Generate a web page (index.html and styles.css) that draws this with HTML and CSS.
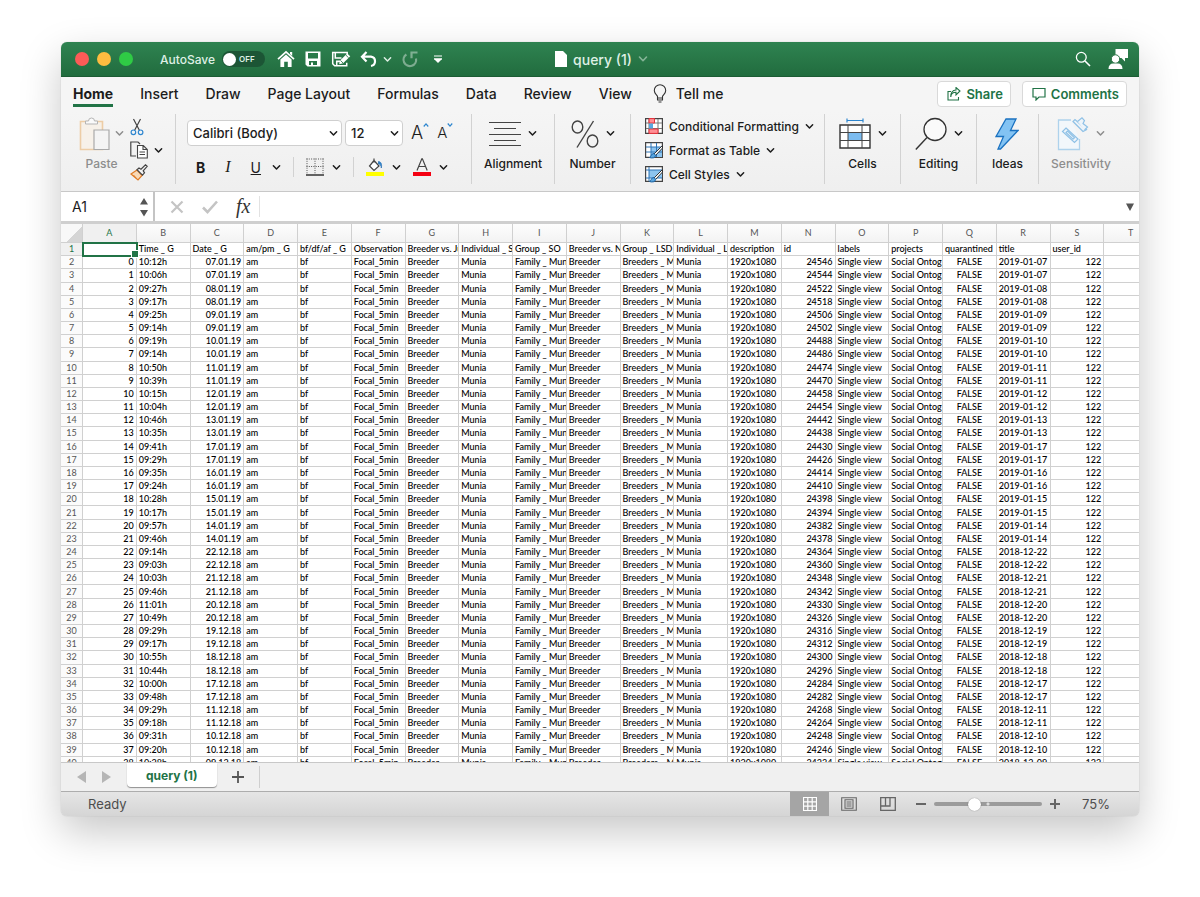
FILE: index.html
```html
<!DOCTYPE html>
<html lang="en">
<head>
    <meta charset="UTF-8">
    <meta name="viewport" content="width=device-width, initial-scale=1.0">
    <title>query (1)</title>
    <link rel="stylesheet" href="styles.css">
</head>
<body>
    <svg class="symbols" aria-hidden="true">
        <symbol id="chevron" viewBox="0 0 8 8"><path d="M1.2 2.4 4 5.4l2.8-3" fill="none" stroke="currentColor" stroke-width="1.3" stroke-linecap="round" stroke-linejoin="round"/></symbol>
    </svg>

    <div class="window">
        <header class="titlebar">
            <div class="title-left">
                <div class="lights">
                    <button class="light red" aria-label="Close"></button>
                    <button class="light yellow" aria-label="Minimize"></button>
                    <button class="light green" aria-label="Zoom"></button>
                </div>
                <label class="autosave">AutoSave
                    <span class="switch"><input type="checkbox"><span class="off">OFF</span></span>
                </label>
                <div class="quick">
                    <button aria-label="Home"><svg width="18" height="18" viewBox="0 0 18 18"><path d="M1 9.200 9 1.800l8 7.400" fill="none" stroke="#fff" stroke-width="1.700"/><path d="M13 2h2.200v4L13 4z" fill="#fff"/><path d="M3.400 9.500 9 4.600l5.600 4.900V17h-3.800v-5.200H7.200V17H3.400z" fill="#fff"/></svg></button>
                    <button aria-label="Save"><svg width="18" height="18" viewBox="0 0 18 18"><path fill="#fff" fill-rule="evenodd" d="M1.500 1.500H16.500V16.500H3.500l-2-2zM4 3v5.500h10V3zM5 11v4h2v-2.500h2V15h4v-4z"/></svg></button>
                    <button aria-label="Save as"><svg width="20" height="18" viewBox="0 0 21 18"><path fill="none" stroke="#fff" stroke-width="1.600" d="M17 4V2.200H1.800V14l2 2H16.500v-3M4.500 2.500V8H11M6 16v-4.500h4"/><path d="m8.500 14.500 1-4L17 3.200l3.200 3-7.500 7.300z" fill="#fff"/><path d="m15.500 4.800 3 3M10 10.500l2.600 2.700" stroke="#24713f" stroke-width=".9"/></svg></button>
                    <button class="undo" aria-label="Undo"><svg width="18" height="18" viewBox="0 0 18 18"><path d="M6.500 2 2 6.700l4.500 4.700M2.300 6.700H11a4.700 4.700 0 0 1 0 9.300" fill="none" stroke="#fff" stroke-width="2.200"/></svg><svg class="chev" width="9" height="9"><use href="#chevron"/></svg></button>
                    <button class="dim" aria-label="Redo"><svg width="18" height="18" viewBox="0 0 18 18"><path d="M5.400 4.500A6.300 6.300 0 1 0 15 8.500M10.500 8.300V2.500h6" fill="none" stroke="#fff" stroke-width="2.200"/></svg></button>
                    <button aria-label="Customize toolbar"><svg width="10" height="10" viewBox="0 0 10 10"><path d="M1 2h8M1 4.800h8" stroke="#fff" stroke-width="1.200"/><path d="M1 5h8L5 9z" fill="#fff"/></svg></button>
                </div>
            </div>
            <button class="doc"><svg width="12" height="16" viewBox="0 0 12 16"><path d="M0 0h8l4 4v12H0z" fill="#fff"/></svg>query (1)<svg class="chev" width="10" height="10"><use href="#chevron"/></svg></button>
            <div class="title-right">
                <button aria-label="Search"><svg width="16" height="16" viewBox="0 0 16 16"><circle cx="6.300" cy="6.300" r="4.900" fill="none" stroke="#fff" stroke-width="1.300"/><path d="m10 10 5 5" stroke="#fff" stroke-width="1.600"/></svg></button>
                <button aria-label="Account"><svg width="20" height="20" viewBox="0 0 20 20"><path d="M7.500 0H20v9h-3v3.500L13.500 9h-6z" fill="#fff"/><circle cx="7.500" cy="10" r="4.200" fill="#fff" stroke="#2a7445"/><path d="M.5 20c0-3.500 2-5.400 4.500-5.400h5c2.500 0 4.500 1.900 4.500 5.400z" fill="#fff"/></svg></button>
            </div>
        </header>

        <nav class="tabs">
            <button class="tab active">Home</button>
            <button class="tab">Insert</button>
            <button class="tab">Draw</button>
            <button class="tab">Page Layout</button>
            <button class="tab">Formulas</button>
            <button class="tab">Data</button>
            <button class="tab">Review</button>
            <button class="tab">View</button>
            <button class="tab tell"><svg width="14" height="20" viewBox="0 0 14 20"><path d="M4.500 14v-1.600C3.700 10.500 1.300 9.700 1.300 6.500a5.700 5.700 0 0 1 11.400 0c0 3.200-2.400 4-3.200 5.900V14zM4.500 14v2h5v-2M5.500 18h3" fill="none" stroke="#333" stroke-width="1.100"/></svg>Tell me</button>
            <div class="tab-actions">
                <button class="pill"><svg width="14" height="14" viewBox="0 0 14 14"><path d="M4 4.500H1v8.500h10.500V10M3.800 10C4 7 6 5.300 9 5.300V8l4-4-4-3.500V3C5.500 3 3.500 6 3.800 10z" fill="none" stroke="#217346" stroke-width="1.100"/></svg>Share</button>
                <button class="pill"><svg width="14" height="14" viewBox="0 0 14 14"><path d="M1 1.500h12v8.500H7l-3 3v-3H1z" fill="none" stroke="#217346" stroke-width="1.200"/></svg>Comments</button>
            </div>
        </nav>

        <section class="ribbon">
            <div class="group clipboard">
                <button class="big faded">
                    <span class="pic"><svg width="32" height="34" viewBox="0 0 32 34"><path d="M1.500 4.500h22v28h-22z" fill="#f7f1e9" stroke="#edcda6" stroke-width="1.600"/><path d="M6.500 7V4h3a3 3 0 0 1 6 0h3v3z" fill="#fafafa" stroke="#b5b5b5"/><path d="M15 13h15v19.500H15z" fill="#f4f4f4" stroke="#a9a9a9" stroke-width="1.200"/></svg><svg class="chev" width="9" height="9"><use href="#chevron"/></svg></span>
                    Paste
                </button>
                <div class="stack">
                    <button aria-label="Cut"><svg width="14" height="18" viewBox="0 0 14 18"><path d="m3.500 1 6 11.500M10.500 1l-6 11.500" stroke="#444" stroke-width="1.200"/><g fill="none" stroke="#2e86cf" stroke-width="1.200"><circle cx="3.400" cy="14.300" r="2.300"/><circle cx="10.600" cy="14.300" r="2.300"/></g></svg></button>
                    <button aria-label="Copy"><svg width="18" height="18" viewBox="0 0 18 18"><path d="M6 15H.8V1H8l2 2" fill="none" stroke="#444" stroke-width="1.200"/><path d="M7.500 4.500h5.800l4 4V17H7.500zM13 4.500v4h4M9.500 11h5.500M9.500 13.500h5.500" fill="#fff" stroke="#444" stroke-width="1.100"/></svg><svg class="chev" width="9" height="9"><use href="#chevron"/></svg></button>
                    <button aria-label="Format painter"><svg width="18" height="17" viewBox="0 0 18 17"><path d="m1 10 6-4 5 5.500L8 16z" fill="#f9d9b6" stroke="#e07b25" stroke-width="1.200"/><path d="m3.500 11 3 3.500" stroke="#e07b25"/><path d="m7 5.800 2-1.800 2 1.200L15.500.8l1.700 1.500-4 4.500 1.300 2-2 2.400z" fill="#f3f3f3" stroke="#444" stroke-width="1.200"/></svg></button>
                </div>
            </div>

            <div class="group font">
                <div class="row">
                    <label class="drop family"><select aria-label="Font"><option>Calibri (Body)</option></select><svg width="9" height="9"><use href="#chevron"/></svg></label>
                    <label class="drop size"><select aria-label="Font size"><option>12</option></select><svg width="9" height="9"><use href="#chevron"/></svg></label>
                    <button class="grow" aria-label="Increase font size">A<svg width="6" height="6" viewBox="0 0 8 8"><path d="m1 6 3-3.500L7 6" fill="none" stroke="#2e86cf" stroke-width="1.600"/></svg></button>
                    <button class="grow shrink" aria-label="Decrease font size">A<svg width="6" height="6" viewBox="0 0 8 8"><path d="m1 2 3 3.500L7 2" fill="none" stroke="#2e86cf" stroke-width="1.600"/></svg></button>
                </div>
                <div class="row marks">
                    <button class="mark bold">B</button>
                    <button class="mark italic">I</button>
                    <button class="mark underline"><u>U</u><svg width="9" height="9"><use href="#chevron"/></svg></button>
                    <i class="rule"></i>
                    <button class="mark" aria-label="Borders"><svg width="18" height="18" viewBox="0 0 18 18"><path d="M.5 1h17M.5 8.500h17M1 .5v16M9 .5v16M17 .5v16" stroke="#555" stroke-dasharray="1 1.300"/><path d="M0 17h18" stroke="#333" stroke-width="1.400"/></svg><svg width="9" height="9"><use href="#chevron"/></svg></button>
                    <i class="rule"></i>
                    <button class="mark" aria-label="Fill color"><svg width="18" height="18" viewBox="0 0 18 18"><path d="M8 .5v4M8 2.500l5 5.500-5 4.500L3.500 8z" fill="#fff" stroke="#444" stroke-width="1.200"/><path d="M12.500 3.500c3 .5 3.500 3 2.800 6.500-.2-2.500-1-4-2.800-4z" fill="#2e86cf" stroke="#2e75b6" stroke-width=".8"/><path d="M0 14h18v4H0z" fill="#ff0"/></svg><svg width="9" height="9"><use href="#chevron"/></svg></button>
                    <button class="mark" aria-label="Font color"><svg width="18" height="18" viewBox="0 0 18 18"><path d="M4 12.500 8.800.8h.6l4.800 11.700M5.700 8.500h6.800" fill="none" stroke="#444" stroke-width="1.200"/><path d="M0 14h18v4H0z" fill="#f40012"/></svg><svg width="9" height="9"><use href="#chevron"/></svg></button>
                </div>
            </div>

            <div class="group">
                <button class="big"><span class="pic"><svg width="32" height="26" viewBox="0 0 32 26"><path d="M0 1.500h32M5 7.500h22M0 13.500h32M5 19.500h22M0 24.500h32" stroke="#444" stroke-width="1.200"/></svg><svg class="chev" width="9" height="9"><use href="#chevron"/></svg></span>Alignment</button>
            </div>
            <div class="group">
                <button class="big"><span class="pic"><svg width="28" height="28" viewBox="0 0 28 28"><g fill="none" stroke="#444" stroke-width="1.400"><ellipse cx="6.500" cy="7" rx="5.300" ry="6"/><ellipse cx="21.500" cy="21" rx="5.300" ry="6"/><path d="M22.500 1 6 27.500"/></g></svg><svg class="chev" width="9" height="9"><use href="#chevron"/></svg></span>Number</button>
            </div>

            <div class="group styles">
                <button><svg width="18" height="16" viewBox="0 0 18 16"><path d="M.6.6h16.800v14.800H.6z" fill="#fff" stroke="#444" stroke-width="1.200"/><path d="M4 1v14M13 1v14M1 5h16M1 10.500h16" stroke="#777"/><path d="M4 .6h5.500V5H4zM4 11h9v4.400H4z" fill="#ff8f94" stroke="#e8303a"/><path d="M4 5.500h4v5H4z" fill="#5aa7e0"/></svg>Conditional Formatting<svg width="9" height="9"><use href="#chevron"/></svg></button>
                <button><svg width="18" height="17" viewBox="0 0 18 17"><path d="M.6.6h16.800v14.800H.6z" fill="#fff" stroke="#444" stroke-width="1.200"/><path d="M6 5h11v10H6z" fill="#8cc4ef"/><path d="M6 1v14M11.500 1v14M1 5h16M1 10h16" stroke="#2e75b6"/><path d="M17.500 3.500 9 12l1.500 1.500L17.500 6z" fill="#fff" stroke="#333"/><path d="M9 11.500c-3 0-2.500 3-4.500 4 2.500 1 6 .5 6.200-2.200z" fill="#5aa7e0" stroke="#1e66a8"/></svg>Format as Table<svg width="9" height="9"><use href="#chevron"/></svg></button>
                <button><svg width="18" height="17" viewBox="0 0 18 17"><path d="M.6.6h16.800v14.800H.6z" fill="#fff" stroke="#444" stroke-width="1.200"/><path d="M4 4h13v8H4z" fill="#8cc4ef"/><path d="M4 1v14M1 4h16M1 12h16" stroke="#2e75b6"/><path d="M17.500 3.500 9 12l1.500 1.500L17.500 6z" fill="#fff" stroke="#333"/><path d="M9 11.500c-3 0-2.500 3-4.500 4 2.500 1 6 .5 6.200-2.200z" fill="#5aa7e0" stroke="#1e66a8"/></svg>Cell Styles<svg width="9" height="9"><use href="#chevron"/></svg></button>
            </div>

            <div class="group">
                <button class="big"><span class="pic"><svg width="32" height="32" viewBox="0 0 32 32"><path d="M8 2.500h16M8 .5v4M24 .5v4" stroke="#2e86cf" stroke-width="1.200"/><path d="M1 7h30v23H1z" fill="#fff" stroke="#333" stroke-width="1.400"/><path d="M9 14.500h14v8H9z" fill="#7cbcf0"/><path d="M9 7v23M23 7v23M1 14.500h30M1 22.500h30" stroke="#444"/></svg><svg class="chev" width="9" height="9"><use href="#chevron"/></svg></span>Cells</button>
            </div>
            <div class="group">
                <button class="big"><span class="pic"><svg width="32" height="34" viewBox="0 0 32 34"><circle cx="20" cy="12.500" r="11" fill="#fafafa" stroke="#333" stroke-width="1.300"/><path d="M12 20.500.8 32.500" stroke="#333" stroke-width="1.400"/></svg><svg class="chev" width="9" height="9"><use href="#chevron"/></svg></span>Editing</button>
            </div>
            <div class="group">
                <button class="big"><span class="pic"><svg width="24" height="32" viewBox="0 0 24 32"><path d="M11 1h10l-5.500 11.500H23L5.500 31H3l5.500-12.500H1z" fill="#83c3f3" stroke="#1b72c0" stroke-width="1.300"/></svg></span>Ideas</button>
            </div>
            <div class="group">
                <button class="big faded"><span class="pic"><svg width="32" height="34" viewBox="0 0 32 34"><path d="M14 3H1.500v29.500h21V22" fill="#f2f7fb" stroke="#aed2ec" stroke-width="1.300"/><g fill="#edf4fa" stroke="#8fc1e6" stroke-width="1.200"><path d="m9 11 12 11-3.500 3.500L5.500 14.500z"/><path d="m10.500 14 7 6.800-1.500 1.400-7-6.800zM16 4.500 26 14.500l3.500-1.800L18 2.500z"/><path d="M20.500 4.500 25 .8l2.500 2.700-1.500 3 4.500 3.500-3 3"/></g></svg><svg class="chev" width="9" height="9"><use href="#chevron"/></svg></span>Sensitivity</button>
            </div>
        </section>

        <div class="formula">
            <div class="name-box">
                <input type="text" value="A1" aria-label="Cell name">
                <button aria-label="Name list"><svg width="10" height="20" viewBox="0 0 10 20"><path d="m5 1 4 6.500H1zM5 19.500 1 13h8z" fill="#555"/></svg></button>
            </div>
            <div class="fx">
                <button aria-label="Cancel"><svg width="14" height="14" viewBox="0 0 14 14"><path d="m1.500 1.500 11 11M12.500 1.500l-11 11" stroke="#c4c4c4" stroke-width="2.200"/></svg></button>
                <button aria-label="Enter"><svg width="16" height="14" viewBox="0 0 16 14"><path d="m1 7.500 4.500 4.500L15 1.500" fill="none" stroke="#c4c4c4" stroke-width="2.600"/></svg></button>
                <button class="fn">fx</button>
            </div>
            <input class="entry" type="text" aria-label="Formula">
            <button class="expand" aria-label="Expand"><svg width="8" height="8" viewBox="0 0 8 8"><path d="M0 .5h8L4 8z" fill="#555"/></svg></button>
        </div>

        <main class="sheet">
            <table class="grid">
                <thead></thead>
                <tbody></tbody>
            </table>
        </main>

        <footer class="sheet-tabs">
            <button class="arrow" aria-label="Previous sheet"><svg width="9" height="12" viewBox="0 0 9 12"><path d="M9 0v12L0 6z" fill="#b5b5b5"/></svg></button>
            <button class="arrow" aria-label="Next sheet"><svg width="9" height="12" viewBox="0 0 9 12"><path d="M0 0v12l9-6z" fill="#b5b5b5"/></svg></button>
            <button class="sheet-tab">query (1)</button>
            <button class="add" aria-label="Add sheet"><svg width="12" height="12" viewBox="0 0 12 12"><path d="M6 0v12M0 6h12" stroke="#555" stroke-width="1.800"/></svg></button>
        </footer>

        <div class="status">
            <span class="ready">Ready</span>
            <button class="view on" aria-label="Normal view"><svg width="14" height="14" viewBox="0 0 14 14"><path d="M.5.500h13v13H.5zM4.800.5v13M9.200.5v13M.5 4.800h13M.5 9.200h13" fill="none" stroke="#fff" stroke-width="1.200"/></svg></button>
            <button class="view" aria-label="Page layout view"><svg width="16" height="14" viewBox="0 0 16 14"><path d="M.7.7h14.600v12.600H.7zM4 2.800h8v8.400H4zM5.500 5h5M5.500 7h5M5.500 9h5" fill="none" stroke="#666" stroke-width="1.100"/></svg></button>
            <button class="view" aria-label="Page break view"><svg width="16" height="14" viewBox="0 0 16 14"><path d="M.7.7h14.600v12.600H.7zM1 9h9V1M5.500 1v8" fill="none" stroke="#666" stroke-width="1.300"/></svg></button>
            <div class="zoom">
                <button aria-label="Zoom out"><svg width="10" height="10" viewBox="0 0 10 10"><path d="M0 5h10" stroke="#666" stroke-width="2"/></svg></button>
                <input type="range" min="0" max="100" value="36" aria-label="Zoom">
                <button aria-label="Zoom in"><svg width="10" height="10" viewBox="0 0 10 10"><path d="M0 5h10M5 0v10" stroke="#666" stroke-width="2"/></svg></button>
                <span class="percent">75%</span>
            </div>
        </div>
    </div>

    <script>
        const letters = 'ABCDEFGHIJKLMNOPQRST'.split('');
        const titles = ['', 'Time _ G', 'Date _ G', 'am/pm _ G', 'bf/df/af _ G', 'Observation', 'Breeder vs. Ju', 'Individual _ S', 'Group _ SO', 'Breeder vs. N', 'Group _ LSD', 'Individual _ L', 'description', 'id', 'labels', 'projects', 'quarantined', 'title', 'user_id', ''];
        // time, date, id
        const records = `10:12 07.01.19 24546|10:06 07.01.19 24544|09:27 08.01.19 24522|09:17 08.01.19 24518
            |09:25 09.01.19 24506|09:14 09.01.19 24502|09:19 10.01.19 24488|09:14 10.01.19 24486
            |10:50 11.01.19 24474|10:39 11.01.19 24470|10:15 12.01.19 24458|10:04 12.01.19 24454
            |10:46 13.01.19 24442|10:35 13.01.19 24438|09:41 17.01.19 24430|09:29 17.01.19 24426
            |09:35 16.01.19 24414|09:24 16.01.19 24410|10:28 15.01.19 24398|10:17 15.01.19 24394
            |09:57 14.01.19 24382|09:46 14.01.19 24378|09:14 22.12.18 24364|09:03 22.12.18 24360
            |10:03 21.12.18 24348|09:46 21.12.18 24342|11:01 20.12.18 24330|10:49 20.12.18 24326
            |09:29 19.12.18 24316|09:17 19.12.18 24312|10:55 18.12.18 24300|10:44 18.12.18 24296
            |10:00 17.12.18 24284|09:48 17.12.18 24282|09:29 11.12.18 24268|09:18 11.12.18 24264
            |09:31 10.12.18 24248|09:20 10.12.18 24246|10:28 09.12.18 24234`.split('|').map(r => r.trim().split(' '));

        const rightCols = [0, 2, 13, 18];

        function cell(text, col) {
            const side = rightCols.includes(col) ? 'num' : col === 16 ? 'mid' : '';
            return `<td class="${side}">${text}</td>`;
        }

        document.querySelector('.grid thead').innerHTML =
            '<tr><th class="corner"></th>' + letters.map((l, i) => `<th class="${i ? '' : 'current'}">${l}</th>`).join('') + '</tr>';

        let html = '<tr><th class="current">1</th>' + titles.map((t, i) => i ? `<td>${t}</td>` : '<td class="selected"></td>').join('') + '</tr>';
        records.forEach(([time, date, id], n) => {
            const [d, m, y] = date.split('.');
            const row = [n, time + 'h', date, 'am', 'bf', 'Focal_5min', 'Breeder', 'Munia', 'Family _ Mun', 'Breeder', 'Breeders _ M', 'Munia', '1920x1080', id, 'Single view', 'Social Ontog', 'FALSE', `20${y}-${m}-${d}`, 122, ''];
            html += `<tr><th>${n + 2}</th>${row.map(cell).join('')}</tr>`;
        });
        document.querySelector('.grid tbody').innerHTML = html;
    </script>
</body>
</html>
```
FILE: styles.css
```css
* {
    box-sizing: border-box;
    margin: 0;
    padding: 0;
}

body {
    display: flex;
    flex-direction: column;
    height: 100vh;
    padding: 42px 61px 81px;
    background: #fff;
    font-family: Inter, "Liberation Sans", sans-serif;
    font-size: 12px;
    color: #1c1c1c;
}

button,
input,
select {
    font: inherit;
    color: inherit;
    background: none;
    border: 0;
    outline: 0;
}

button {
    display: flex;
    align-items: center;
}

svg {
    display: block;
    flex-shrink: 0;
}

.symbols {
    position: absolute;
    width: 0;
    height: 0;
}

.window {
    flex: 1;
    min-height: 0;
    display: flex;
    flex-direction: column;
    border-radius: 6px;
    overflow: hidden;
    background: #f1f1f1;
    box-shadow: 0 0 1px rgba(0, 0, 0, 0.3), 0 16px 40px rgba(0, 0, 0, 0.22);
}

/* title bar */
.titlebar {
    flex: none;
    display: grid;
    grid-template-columns: 1fr auto 1fr;
    align-items: center;
    height: 35px;
    padding: 0 11px 0 14px;
    background: linear-gradient(#2f8351, #216c3e);
    border-bottom: 1px solid #1c5c34;
    color: #dff0e5;
}

.title-left,
.title-right,
.lights,
.autosave,
.quick {
    display: flex;
    align-items: center;
}

.lights {
    gap: 8px;
}

.light {
    width: 14px;
    height: 14px;
    border-radius: 50%;
}

.red { background: #fc5b57; }
.yellow { background: #fdbc40; }
.green { background: #2fcb45; }

.autosave {
    gap: 7px;
    margin-left: 27px;
    font-weight: 500;
}

.switch {
    display: flex;
    align-items: center;
    width: 43px;
    height: 16px;
    border-radius: 8px;
    background: #1c5535;
}

.switch input {
    appearance: none;
    width: 13px;
    height: 13px;
    margin-left: 1px;
    border-radius: 50%;
    background: #fff;
}

.off {
    margin-left: 3px;
    font-size: 8px;
    font-weight: 600;
}

.quick {
    gap: 9px;
    margin-left: 12px;
}

.undo {
    gap: 5px;
}

.dim {
    opacity: 0.4;
}

.quick button:last-child {
    margin-left: 5px;
}

.doc {
    gap: 6px;
    font-size: 14px;
    font-weight: 500;
}

.doc .chev {
    opacity: 0.5;
}

.title-right {
    justify-content: flex-end;
    gap: 17px;
}

/* ribbon tabs */
.tabs {
    flex: none;
    display: flex;
    align-items: center;
    gap: 27px;
    height: 34px;
    padding: 0 12px;
    background: #f5f5f5;
}

.tab {
    font-size: 14px;
    line-height: 20px;
    font-weight: 500;
    border-bottom: 3px solid transparent;
    border-top: 3px solid transparent;
}

.tab.active {
    font-weight: 700;
    border-bottom-color: #217346;
}

.tell {
    gap: 9px;
    margin-left: -6px;
}

.tab-actions {
    display: flex;
    gap: 11px;
    margin-left: auto;
}

.pill {
    gap: 5px;
    height: 26px;
    padding: 0 7px 0 9px;
    border: 1px solid #d9d9d9;
    border-radius: 4px;
    background: #fff;
    color: #217346;
    font-size: 13px;
    font-weight: 600;
}

/* ribbon */
.ribbon {
    flex: none;
    display: grid;
    grid-template-columns: 115fr 296fr 83fr 76fr 194fr 76fr 76fr 62fr 100fr;
    height: 80px;
    padding: 3px 0 9px;
    background: linear-gradient(#f5f5f5, #efefef);
    font-weight: 500;
}

.group {
    display: flex;
    justify-content: center;
    min-width: 0;
    border-right: 1px solid #d2d2d2;
}

.group:last-child {
    padding-right: 16px;
    border: 0;
}

.big {
    flex-direction: column;
    gap: 3px;
    height: 58px;
    line-height: 16px;
}

.pic {
    display: flex;
    align-items: center;
    gap: 7px;
    height: 43px;
}

.faded {
    color: #8d8d8d;
}

.clipboard {
    justify-content: flex-start;
    gap: 6px;
    padding-left: 18px;
}

.clipboard .pic {
    gap: 4px;
}

.stack {
    display: flex;
    flex-direction: column;
    gap: 5px;
    padding-top: 4px;
}

.stack button {
    gap: 6px;
}

.font {
    flex-direction: column;
    justify-content: flex-start;
    padding: 6px 12px 0 11px;
}

.row {
    display: flex;
    align-items: center;
    gap: 3px;
}

.drop {
    display: flex;
    align-items: center;
    min-width: 0;
    height: 26px;
    padding: 0 3px 0 5px;
    border: 1px solid #cfcfcf;
    border-radius: 4px;
    background: #fff;
    font-size: 13px;
}

.drop select {
    flex: 1;
    min-width: 0;
    appearance: none;
}

.family { flex: 0 1 155px; }
.size { flex: 0 1 58px; }

.grow {
    align-items: flex-start;
    margin-left: 5px;
    font-size: 18px;
    font-weight: 300;
    line-height: 22px;
}

.shrink {
    font-size: 15px;
}

.marks {
    gap: 12px;
    margin-top: 9px;
    padding-left: 9px;
}

.mark {
    gap: 8px;
    height: 24px;
    font-size: 14px;
    font-weight: 400;
}

.bold { font-weight: 700; }
.italic { font-family: "Liberation Serif", serif; font-style: italic; font-size: 16px; margin: 0 8px; }
.underline { gap: 11px; }

.rule {
    width: 1px;
    height: 20px;
    background: #d2d2d2;
}

.styles {
    flex-direction: column;
    justify-content: flex-start;
    gap: 4px;
    padding: 2px 0 0 14px;
}

.styles button {
    gap: 6px;
    height: 20px;
    white-space: nowrap;
}

/* formula bar */
.formula {
    flex: none;
    display: flex;
    height: 33px;
    border-top: 1px solid #c8c8c8;
    border-bottom: 3px solid #cfcfcf;
    background: #fff;
}

.name-box {
    display: flex;
    align-items: center;
    width: 94px;
    padding: 0 4px 0 11px;
    border-right: 2px solid #c4c4c4;
}

.name-box input {
    flex: 1;
    min-width: 0;
    font-size: 14px;
}

.fx {
    display: flex;
    align-items: center;
    gap: 18px;
    margin: 4px 0;
    padding: 0 9px 0 15px;
    border-right: 1px solid #e2e2e2;
}

.fn {
    font: italic 20px "Liberation Serif", serif;
    color: #333;
}

.entry {
    flex: 1;
    padding: 0 8px;
}

.expand {
    padding: 0 5px;
}

/* cells */
.sheet {
    flex: 1;
    min-height: 0;
    overflow: hidden;
    background: #fff;
}

/* last column runs past the window edge */
.grid {
    width: calc(100% + 19px);
    height: 546px;
    table-layout: fixed;
    border-collapse: separate;
    border-spacing: 0;
    font-family: Lato, "Liberation Sans", sans-serif;
    font-size: 9px;
    line-height: 12px;
    color: #000;
}

.grid th,
.grid td {
    padding: 0 2px;
    border-right: 1px solid #d0d0d0;
    border-bottom: 1px solid #d0d0d0;
    overflow: hidden;
    white-space: nowrap;
    text-align: left;
    font-weight: 500;
}

.grid th {
    text-align: center;
    font-weight: 400;
    color: #555;
    background: #fbfbfb;
}

.grid thead th {
    height: 19px;
    background: linear-gradient(#fdfdfd, #f3f3f3);
}

.grid thead .corner {
    width: 22px;
    background: linear-gradient(135deg, #f8f8f8 60%, #d5d5d5 60%);
}

.grid .current {
    color: #217346;
    background: #f0f0f0;
}

.grid .num { text-align: right; }
.grid .mid { text-align: center; }

.grid .selected {
    position: relative;
    overflow: visible;
    outline: 2px solid #217346;
    outline-offset: -1px;
}

/* fill handle */
.selected::after {
    content: "";
    position: absolute;
    right: -3px;
    bottom: -3px;
    width: 6px;
    height: 6px;
    border: 1px solid #fff;
    background: #217346;
}

/* sheet tabs */
.sheet-tabs {
    flex: none;
    display: flex;
    align-items: center;
    height: 29px;
    padding-left: 16px;
    border-top: 1px solid #c8c8c8;
    background: #f0f0f0;
}

.arrow {
    margin-right: 16px;
}

.sheet-tab {
    align-self: flex-start;
    height: 24px;
    padding: 0 19px;
    border-radius: 0 0 4px 4px;
    background: #fff;
    box-shadow: 0 1px 1px rgba(0, 0, 0, 0.4);
    color: #217346;
    font-weight: 700;
}

.add {
    height: 22px;
    padding: 0 15px;
    border-right: 1px solid #cfcfcf;
}

/* status bar */
.status {
    flex: none;
    display: flex;
    align-items: stretch;
    height: 25px;
    padding-left: 27px;
    border-top: 1px solid #adadad;
    background: linear-gradient(#e5e5e5, #d5d5d5);
    color: #4d4d4d;
    font-size: 13px;
}

.ready {
    flex: 1;
    align-self: center;
}

.view {
    width: 39px;
    justify-content: center;
}

.view.on {
    background: #a5a5a5;
}

.zoom {
    display: flex;
    align-items: center;
    gap: 8px;
    padding: 0 29px 0 9px;
}

.zoom input {
    appearance: none;
    width: 108px;
    height: 4px;
    border-radius: 2px;
    background: radial-gradient(circle at 50% 50%, #ddd 1px, #9b9b9b 2px);
}

.zoom input::-webkit-slider-thumb {
    appearance: none;
    width: 13px;
    height: 13px;
    border-radius: 50%;
    background: #fff;
    box-shadow: 0 0 1px rgba(0, 0, 0, 0.5);
}

.percent {
    margin-left: 14px;
}
```
